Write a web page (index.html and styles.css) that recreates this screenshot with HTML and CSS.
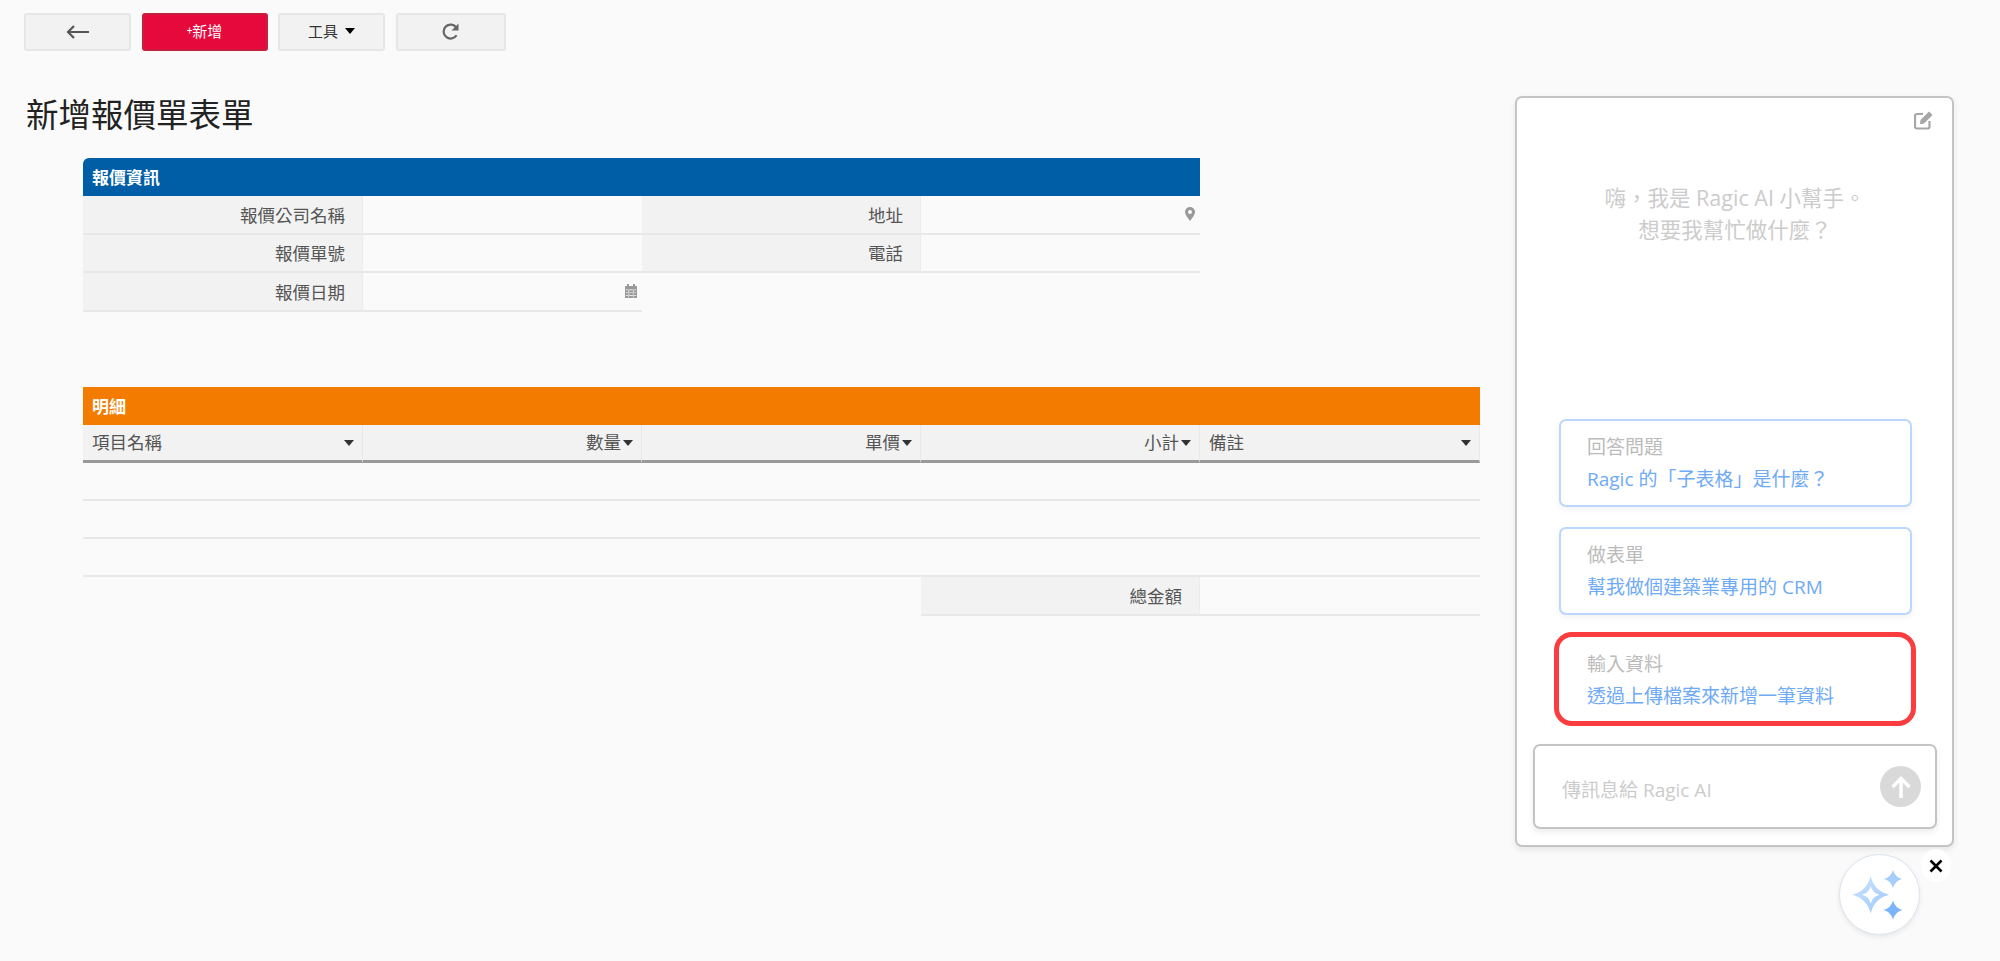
FILE: index.html
```html
<!DOCTYPE html>
<html lang="zh-Hant">
<head>
  <meta charset="UTF-8">
  <meta name="viewport" content="width=device-width, initial-scale=1">
  <title>新增報價單表單</title>
  <link rel="stylesheet" href="styles.css">
</head>
<body>

<div class="page">
  <div class="main">
    <div class="toolbar">
      <button class="btn btn-back">
        <svg width="26" height="16" viewBox="0 0 26 16"><path d="M9 2 3 8l6 6M3 8h21" fill="none" stroke="#555" stroke-width="2.200"/></svg>
      </button>
      <button class="btn btn-new"><span class="plus">+</span>新增</button>
      <button class="btn btn-tools">工具 <span class="caret caret-black"></span></button>
      <button class="btn btn-refresh">
        <svg width="20" height="20" viewBox="0 0 20 20"><path d="M15.6 13.2A7 7 0 1 1 15.4 5.6" fill="none" stroke="#666" stroke-width="2.200"/><path d="M17.5 1.5v7h-7z" fill="#666"/></svg>
      </button>
    </div>

    <h1>新增報價單表單</h1>

    <div class="section section-info">
      <div class="section-head head-blue">報價資訊</div>
      <div class="form-grid">
        <div class="label">報價公司名稱</div>
        <div class="value"></div>
        <div class="label">地址</div>
        <div class="value">
          <svg class="field-icon" width="10" height="14" viewBox="0 0 10 14"><path fill-rule="evenodd" d="M5 0a5 5 0 0 1 5 5c0 3-3 6-5 9-2-3-5-6-5-9a5 5 0 0 1 5-5zm0 3a2 2 0 1 0 0 4 2 2 0 0 0 0-4z" fill="#999"/></svg>
        </div>
        <div class="label">報價單號</div>
        <div class="value"></div>
        <div class="label">電話</div>
        <div class="value"></div>
        <div class="label">報價日期</div>
        <div class="value">
          <svg class="field-icon" width="12" height="14" viewBox="0 0 12 14"><path fill-rule="evenodd" d="M2 0h2v2h4V0h2v2h2v12H0V2h2zM.8 5.500v.7h10.400v-.7zm0 3v.6h10.400v-.6zm0 2.800v.6h10.400v-.6zM3.500 5.500v8h.6v-8zm4.400 0v8h.6v-8z" fill="#999"/></svg>
        </div>
      </div>
    </div>

    <div class="section section-detail">
      <div class="section-head head-orange">明細</div>
      <div class="sub-head">
        <div class="col-head col-left">項目名稱<span class="caret"></span></div>
        <div class="col-head col-right">數量<span class="caret"></span></div>
        <div class="col-head col-right">單價<span class="caret"></span></div>
        <div class="col-head col-right">小計<span class="caret"></span></div>
        <div class="col-head col-left">備註<span class="caret"></span></div>
      </div>
      <div class="empty-row"></div>
      <div class="empty-row"></div>
      <div class="empty-row"></div>
      <div class="total-row">
        <div class="label">總金額</div>
        <div class="value"></div>
      </div>
    </div>
  </div>

  <div class="assistant">
    <div class="panel">
      <div class="panel-top">
        <svg width="20" height="20" viewBox="0 0 20 20"><path d="M15.500 11v5.500a2 2 0 0 1-2 2H3a2 2 0 0 1-2-2V6a2 2 0 0 1 2-2h6" fill="none" stroke="#a6a6a6" stroke-width="2.200"/><path d="M6.500 10 15 1.500l3.500 3.500-8.500 8.500-4 .8z" fill="#a6a6a6"/></svg>
      </div>
      <p class="welcome">嗨，我是 Ragic AI 小幫手。<br>想要我幫忙做什麼？</p>
      <div class="cards">
        <div class="card">
          <div class="card-title">回答問題</div>
          <div class="card-link">Ragic 的「子表格」是什麼？</div>
        </div>
        <div class="card">
          <div class="card-title">做表單</div>
          <div class="card-link">幫我做個建築業專用的 CRM</div>
        </div>
        <div class="card card-marked">
          <div class="card-title">輸入資料</div>
          <div class="card-link">透過上傳檔案來新增一筆資料</div>
        </div>
      </div>
      <div class="chat-input">
        <span class="placeholder">傳訊息給 Ragic AI</span>
        <span class="send">
          <svg width="24" height="24" viewBox="0 0 24 24"><path d="M12 23V4M3.500 12 12 3.500 20.500 12" fill="none" stroke="#fff" stroke-width="3.400"/></svg>
        </span>
      </div>
    </div>

    <div class="fab-wrap">
      <div class="fab">
        <svg width="79" height="79" viewBox="0 0 79 79">
          <defs>
            <linearGradient id="sparkle" x1="0" y1="0" x2="1" y2="1">
              <stop offset="0" stop-color="#cfe4fd"/>
              <stop offset="1" stop-color="#9cc8fb"/>
            </linearGradient>
          </defs>
          <path fill="url(#sparkle)" fill-rule="evenodd" d="M30.700 21Q34 36 49.200 39.700 34 43.500 30.700 58.500 27 43.500 12.200 39.700 27 36 30.700 21zM30.700 31Q29 38 22 39.700 29 41.500 30.700 48.500 32.500 41.500 39.500 39.700 32.500 38 30.700 31z"/>
          <path fill="#a6cdfb" d="M53 15Q55 22 62 24 55 26 53 33 51 26 44 24 51 22 53 15z"/>
          <path fill="#7ab5fa" d="M53 45.500Q55 53 62.500 55 55 57 53 64.500 51 57 43.500 55 51 53 53 45.500z"/>
        </svg>
      </div>
      <span class="fab-close">
        <svg width="14" height="14" viewBox="0 0 14 14"><path d="M1.500 1.500l11 11M12.500 1.500l-11 11" stroke="#000" stroke-width="2.600"/></svg>
      </span>
    </div>
  </div>
</div>

</body>
</html>
```

FILE: styles.css
```css
* { box-sizing: border-box; }
body {
  margin: 0;
  background: #fafafa;
  font-family: Roboto, "Noto Sans CJK TC", sans-serif;
  color: #555;
}
.page {
  display: flex;
  height: 961px;
  overflow: hidden;
}
.main {
  width: 1515px;
  padding: 13px 0 0 24px;
}
.toolbar {
  display: flex;
  gap: 10.500px;
  height: 38px;
}
.btn {
  height: 38px;
  padding: 0 0 3px;
  border: 2px solid #e6e6e6;
  border-radius: 3px;
  background: #f2f2f2;
  font-family: inherit;
  font-size: 15px;
  color: #333;
  display: flex;
  align-items: center;
  justify-content: center;
}
.btn-back { width: 107px; padding-bottom: 0; }
.btn-new {
  width: 126px;
  background: #e60a3c;
  border-color: #c4213f;
  color: #fff;
}
.plus { font-size: 10px; }
.btn-tools { width: 107px; gap: 7px; }
.btn-refresh { width: 110px; padding-bottom: 0; }
h1 {
  margin: 43px 0 0 2px;
  font-size: 32.500px;
  font-weight: 400;
  line-height: 44px;
  color: #222;
}
.section { margin-left: 59px; }
.section-info { width: 1117px; margin-top: 20px; }
.section-detail { width: 1397px; margin-top: 75px; }
.section-head {
  height: 38px;
  padding: 2px 0 0 9px;
  font-size: 17px;
  font-weight: 700;
  line-height: 36px;
  color: #fff;
}
.head-blue {
  background: #005ea6;
  border-top-left-radius: 6px;
}
.head-orange { background: #f37c00; }
.form-grid {
  display: grid;
  grid-template-columns: 280px 279px 279px 279px;
  grid-auto-rows: 38.500px;
}
.label, .value {
  border-bottom: 2px solid #e8e8e8;
  display: flex;
  align-items: center;
}
.label {
  justify-content: flex-end;
  padding-right: 17px;
  background: #f2f2f2;
  font-size: 17.500px;
  border-right: 1px solid #ececec;
}
.value {
  justify-content: flex-end;
  padding-right: 5px;
}
.field-icon { display: block; }
.sub-head {
  display: grid;
  grid-template-columns: 280px 279px 279px 279px 1fr;
  height: 38px;
}
.col-head {
  display: flex;
  align-items: center;
  padding: 0 8px 2px 9px;
  background: #f2f2f2;
  border-right: 1px solid #e8e8e8;
  border-bottom: 3px solid #999;
  font-size: 17.500px;
  white-space: nowrap;
}
.col-left { justify-content: space-between; }
.col-right { justify-content: flex-end; gap: 2px; }
.caret {
  display: inline-block;
  width: 0;
  height: 0;
  margin-top: 3px;
  border-left: 5.500px solid transparent;
  border-right: 5.500px solid transparent;
  border-top: 6.500px solid #333;
}
.caret-black { border-top-color: #000; margin-top: 0; }
.empty-row {
  height: 38.300px;
  border-bottom: 2px solid #e8e8e8;
}
.total-row {
  display: grid;
  grid-template-columns: 279px 280px;
  justify-content: end;
  height: 38.500px;
}
.assistant {
  width: 439px;
  padding-top: 96px;
}
.panel {
  height: 751px;
  padding: 12px 15px 16px 16px;
  background: #fff;
  border: 2px solid #c4c4c4;
  border-radius: 7px;
  box-shadow: 0 3px 6px rgba(0, 0, 0, 0.08);
  display: flex;
  flex-direction: column;
}
.panel-top {
  display: flex;
  justify-content: flex-end;
  height: 20px;
  padding-right: 3px;
}
.welcome {
  margin: 52px 0 0;
  text-align: center;
  font-family: "Open Sans", "Noto Sans CJK TC", sans-serif;
  font-size: 21.500px;
  line-height: 32px;
  color: #ccc;
}
.cards {
  margin-top: auto;
  padding: 0 25px 0 26px;
  display: flex;
  flex-direction: column;
  gap: 20px;
  font-family: "Open Sans", "Noto Sans CJK TC", sans-serif;
}
.card {
  height: 88px;
  padding: 10px 0 0 26px;
  background: #fff;
  border: 2px solid #b9d8fc;
  border-radius: 7px;
  box-shadow: 0 3px 6px rgba(0, 0, 0, 0.05);
}
.card-marked {
  height: 94px;
  margin: -3px -4px 0 -5px;
  padding: 11px 0 0 28px;
  border: 5px solid #fb3d40;
  border-radius: 18px;
  box-shadow: none;
}
.card-title {
  font-size: 19px;
  line-height: 32px;
  color: #bbb;
}
.card-link {
  font-size: 19px;
  line-height: 32px;
  color: #6faaf5;
}
.chat-input {
  height: 85px;
  margin-top: 18px;
  padding: 0 14px 0 27px;
  border: 2px solid #c4c4c4;
  border-radius: 7px;
  box-shadow: 0 3px 6px rgba(0, 0, 0, 0.08);
  display: flex;
  align-items: center;
  justify-content: space-between;
  font-family: "Open Sans", "Noto Sans CJK TC", sans-serif;
}
.placeholder {
  font-size: 19px;
  color: #ccc;
  padding-top: 5px;
}
.send {
  width: 41px;
  height: 41px;
  border-radius: 50%;
  background: #d9d9d9;
  display: flex;
  align-items: center;
  justify-content: center;
}
.fab-wrap {
  position: relative;
  width: 81px;
  height: 81px;
  margin: 7px 0 0 324px;
}
.fab {
  width: 81px;
  height: 81px;
  background: #fff;
  border: 1px solid #dbe4ef;
  border-radius: 50%;
  box-shadow: 0 2px 5px rgba(0, 0, 0, 0.08);
}
.fab svg { display: block; }
.fab-close {
  position: absolute;
  top: -5px;
  right: -31px;
  width: 30px;
  height: 33px;
  border-radius: 50%;
  background: #fff;
  display: flex;
  align-items: center;
  justify-content: center;
}
```
